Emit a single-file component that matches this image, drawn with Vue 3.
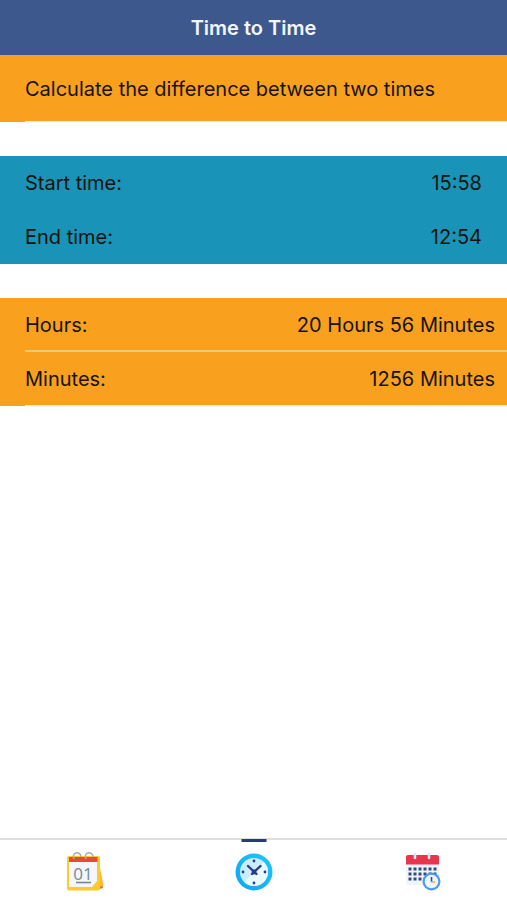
<template>
  <div class="app">
    <header class="navbar">
      <h1>Time to Time</h1>
    </header>

    <main class="content">
      <p class="intro lined">Calculate the difference between two times</p>

      <section class="times">
        <div class="row">
          <label for="start">Start time:</label>
          <input id="start" v-model="start" class="time-box" type="text" maxlength="5" />
        </div>
        <div class="row">
          <label for="end">End time:</label>
          <input id="end" v-model="end" class="time-box" type="text" maxlength="5" />
        </div>
      </section>

      <section class="results">
        <div class="row lined">
          <span>Hours:</span>
          <span>{{ hoursText }}</span>
        </div>
        <div class="row lined">
          <span>Minutes:</span>
          <span>{{ total }} Minutes</span>
        </div>
      </section>
    </main>

    <nav class="tabbar">
      <button
        v-for="tab in tabs"
        :key="tab.id"
        class="tab"
        :class="{ active: current === tab.id }"
        :aria-label="tab.label"
        @click="current = tab.id"
      >
        <svg v-if="tab.id === 'date'" viewBox="0 0 40 40" width="40" height="40">
          <path d="M32 8l6 28-5 1.500z" fill="#f26b2c" />
          <path d="M33 6l5.500 27.500-5 1.500z" fill="#fbb92a" />
          <rect x="2" y="4" width="33" height="34.500" rx="2" fill="#fccb2c" />
          <path d="M4 7h28v28H4z" fill="#f3f6fa" />
          <path d="M4 5h28.500v5H4z" fill="#e84b35" />
          <path d="M27 35l5-6v6z" fill="#fccb2c" />
          <g fill="none" stroke="#a9aeb7" stroke-width="1.500">
            <path d="M9 7c-3-8 7-8 7-2M21 7c-3-8 7-8 7-2" />
          </g>
          <text class="day" x="18" y="28" text-anchor="middle">01</text>
          <path d="M11 30.500h15" stroke="#75889b" stroke-width="1.600" />
        </svg>

        <svg v-else-if="tab.id === 'time'" viewBox="0 0 40 40" width="40" height="40">
          <defs>
            <linearGradient id="ring" x1="0" y1="1" x2="1" y2="0">
              <stop offset="0" stop-color="#0fa4f5" />
              <stop offset="1" stop-color="#20c8f5" />
            </linearGradient>
          </defs>
          <circle cx="20" cy="20" r="18.500" fill="url(#ring)" />
          <circle cx="20" cy="20" r="14" fill="#c9edfc" />
          <path d="M29.900 10.100A14 14 0 0 1 10.100 29.900z" fill="#e8f9ff" />
          <g fill="#293b86">
            <circle cx="20" cy="9" r="1.400" />
            <circle cx="31" cy="20" r="1.400" />
            <circle cx="20" cy="31" r="1.400" />
            <circle cx="9" cy="20" r="1.400" />
            <circle cx="20" cy="20" r="2.400" />
          </g>
          <path
            d="M14 14l8.500 8M26.500 14l-8.500 8"
            fill="none"
            stroke="#293b86"
            stroke-width="2.400"
            stroke-linecap="round"
          />
        </svg>

        <svg v-else viewBox="0 0 40 40" width="40" height="40">
          <rect x="3" y="5" width="33" height="28" rx="2" fill="#f0f4fc" />
          <path d="M3 12.500V5q0-2 2-2h29q2 0 2 2v7.500z" fill="#e9344d" />
          <path
            d="M12 2v4M26 2v4"
            stroke="#e2e5ef"
            stroke-width="2.600"
            stroke-linecap="round"
          />
          <g stroke="#354a7c" stroke-width="2.800" stroke-dasharray="3 2">
            <path d="M5.500 17h28M5.500 22h28M5.500 27h18" />
          </g>
          <circle cx="28.500" cy="29.500" r="9" fill="#4b9be8" />
          <circle cx="28.500" cy="29.500" r="6.800" fill="#edf5ff" />
          <path d="M28.500 25v5" fill="none" stroke="#354a7c" stroke-width="1.600" />
          <path d="M28 30h4" fill="none" stroke="#e8ac62" stroke-width="1.600" />
        </svg>
      </button>
    </nav>
  </div>
</template>

<script setup>
import { computed, ref } from 'vue'

const start = ref('15:58')
const end = ref('12:54')
const current = ref('time')

const tabs = [
  { id: 'date', label: 'Date' },
  { id: 'time', label: 'Time to Time' },
  { id: 'datetime', label: 'Date and time' },
]

const toMinutes = (value) => {
  const [h, m] = value.split(':').map(Number)
  return (h || 0) * 60 + (m || 0)
}

// an end before the start falls on the next day
const total = computed(() => (toMinutes(end.value) - toMinutes(start.value) + 1440) % 1440)

const hoursText = computed(() => `${Math.floor(total.value / 60)} Hours ${total.value % 60} Minutes`)
</script>

<style>
body {
  margin: 0;
  background: #fff;
}
</style>

<style scoped>
.app {
  display: flex;
  flex-direction: column;
  min-height: 100vh;
  font-family: Inter, 'Liberation Sans', sans-serif;
  font-size: 20px;
  line-height: 24px;
  color: #16130f;
}

.navbar {
  display: flex;
  align-items: center;
  justify-content: center;
  height: 55px;
  background: #3d588c;
}

.navbar h1 {
  margin: 0;
  font-size: 20px;
  line-height: 24px;
  font-weight: 600;
  color: #f1f6ff;
}

.content {
  flex: 1;
  display: flex;
  flex-direction: column;
  gap: 34px;
}

.intro {
  display: flex;
  align-items: center;
  box-sizing: border-box;
  height: 67px;
  margin: 0;
  padding: 0 25px;
  background: #f9a01f;
}

.row {
  display: flex;
  align-items: center;
  justify-content: space-between;
  box-sizing: border-box;
  height: 54px;
  padding: 0 12px 0 25px;
}

.times {
  background: #1993b7;
}

.times .row {
  padding-right: 25px;
}

.time-box {
  width: 80px;
  padding: 0;
  border: none;
  outline: none;
  background: transparent;
  font: inherit;
  color: inherit;
  text-align: right;
}

.results {
  background: #f9a01f;
}

/* inset separator along the bottom edge */
.lined {
  position: relative;
}

.lined::after {
  content: '';
  position: absolute;
  left: 25px;
  right: 0;
  bottom: 0;
  height: 2px;
  background: #e8cc78;
}

.intro::after,
.lined:last-child::after {
  height: 1px;
  background: #eff3cc;
}

.tabbar {
  display: flex;
  height: 60px;
  border-top: 2px solid #dedede;
}

.tab {
  position: relative;
  flex: 1;
  display: flex;
  align-items: center;
  justify-content: center;
  padding: 4px 0 0;
  border: none;
  background: #fff;
  cursor: pointer;
}

.tab.active::before {
  content: '';
  position: absolute;
  top: -1px;
  left: 50%;
  width: 25px;
  height: 3px;
  transform: translateX(-50%);
  background: #283a78;
}

.day {
  font-family: 'Open Sans', sans-serif;
  font-size: 17px;
  fill: #75889b;
}
</style>
